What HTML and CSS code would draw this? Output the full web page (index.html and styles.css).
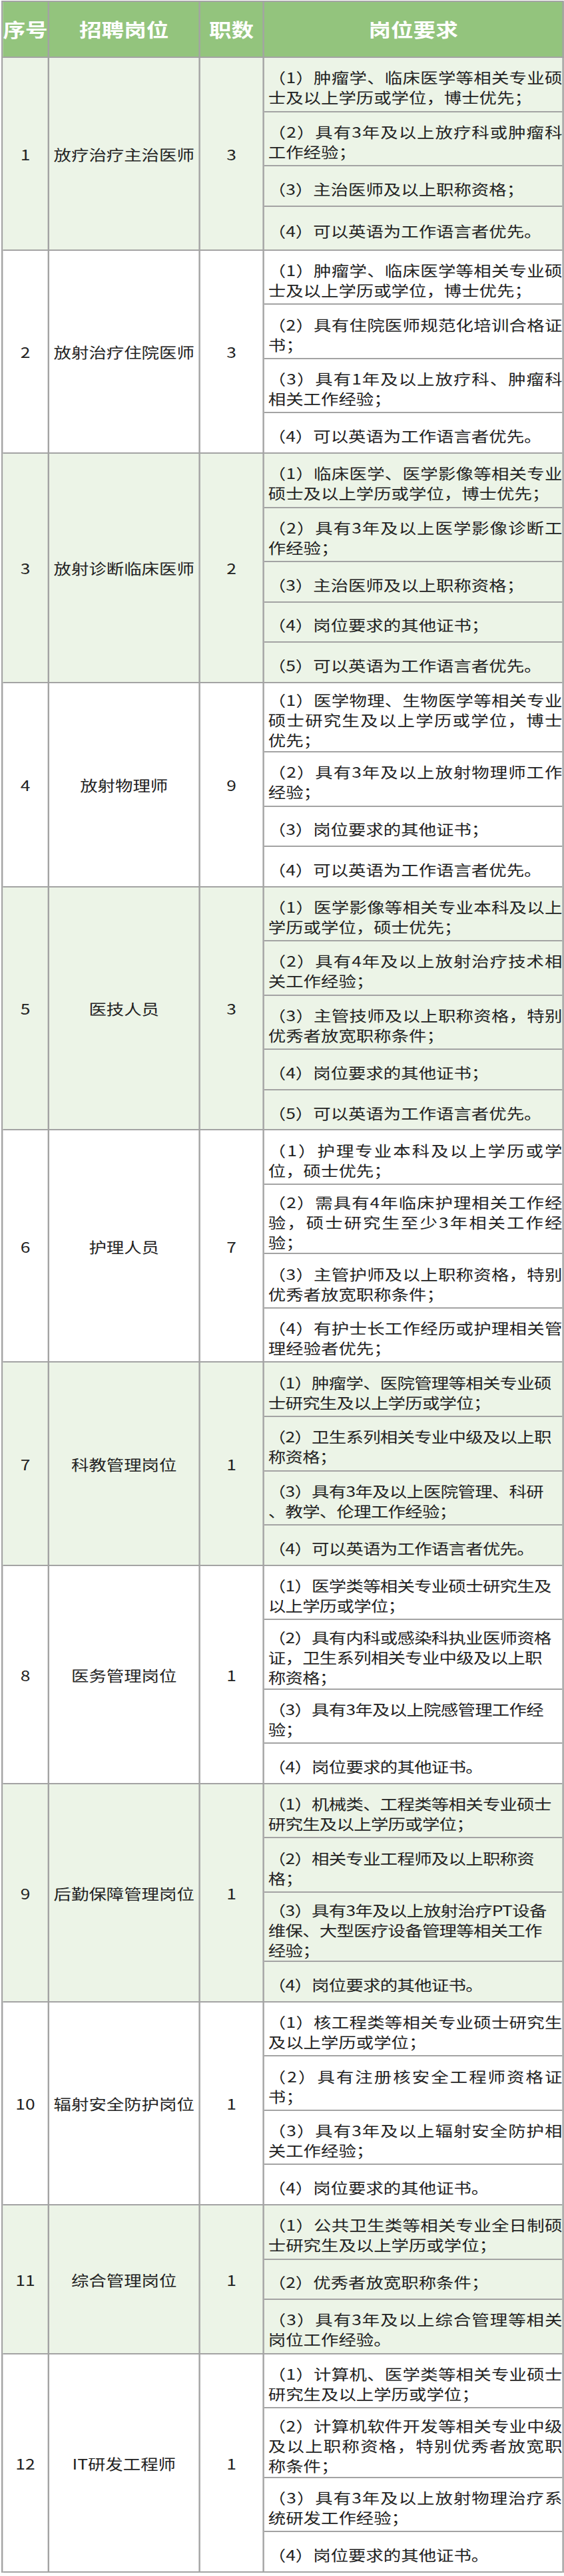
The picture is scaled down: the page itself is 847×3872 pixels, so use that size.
FILE: index.html
```html
<!DOCTYPE html>
<html lang="zh-CN">
<head>
<meta charset="utf-8">
<title>招聘岗位</title>
<link rel="stylesheet" href="styles.css">
</head>
<body>
<div class="page">
<div class="sheet">
  <div class="row head">
    <div class="c">序号</div><div class="c">招聘岗位</div><div class="c">职数</div><div class="c">岗位要求</div>
  </div>

  <div class="row alt">
    <div class="c">1</div><div class="c">放疗治疗主治医师</div><div class="c">3</div>
    <div class="reqs">
      <div class="r l2">（1）肿瘤学、临床医学等相关专业硕士及以上学历或学位，博士优先；</div>
      <div class="r l2">（2）具有3年及以上放疗科或肿瘤科工作经验；</div>
      <div class="r l1">（3）主治医师及以上职称资格；</div>
      <div class="r l1b">（4）可以英语为工作语言者优先。</div>
    </div>
  </div>

  <div class="row">
    <div class="c">2</div><div class="c">放射治疗住院医师</div><div class="c">3</div>
    <div class="reqs">
      <div class="r l2">（1）肿瘤学、临床医学等相关专业硕士及以上学历或学位，博士优先；</div>
      <div class="r l2">（2）具有住院医师规范化培训合格证书；</div>
      <div class="r l2">（3）具有1年及以上放疗科、肿瘤科相关工作经验；</div>
      <div class="r l1">（4）可以英语为工作语言者优先。</div>
    </div>
  </div>

  <div class="row alt">
    <div class="c">3</div><div class="c">放射诊断临床医师</div><div class="c">2</div>
    <div class="reqs">
      <div class="r l2">（1）临床医学、医学影像等相关专业硕士及以上学历或学位，博士优先；</div>
      <div class="r l2">（2）具有3年及以上医学影像诊断工作经验；</div>
      <div class="r l1">（3）主治医师及以上职称资格；</div>
      <div class="r l1">（4）岗位要求的其他证书；</div>
      <div class="r l1">（5）可以英语为工作语言者优先。</div>
    </div>
  </div>

  <div class="row">
    <div class="c">4</div><div class="c">放射物理师</div><div class="c">9</div>
    <div class="reqs">
      <div class="r l3">（1）医学物理、生物医学等相关专业硕士研究生及以上学历或学位，博士优先；</div>
      <div class="r l2">（2）具有3年及以上放射物理师工作经验；</div>
      <div class="r l1">（3）岗位要求的其他证书；</div>
      <div class="r l1">（4）可以英语为工作语言者优先。</div>
    </div>
  </div>

  <div class="row alt">
    <div class="c">5</div><div class="c">医技人员</div><div class="c">3</div>
    <div class="reqs">
      <div class="r l2">（1）医学影像等相关专业本科及以上学历或学位，硕士优先；</div>
      <div class="r l2">（2）具有4年及以上放射治疗技术相关工作经验；</div>
      <div class="r l2">（3）主管技师及以上职称资格，特别优秀者放宽职称条件；</div>
      <div class="r l1">（4）岗位要求的其他证书；</div>
      <div class="r l1">（5）可以英语为工作语言者优先。</div>
    </div>
  </div>

  <div class="row">
    <div class="c">6</div><div class="c">护理人员</div><div class="c">7</div>
    <div class="reqs">
      <div class="r l2">（1）护理专业本科及以上学历或学位，硕士优先；</div>
      <div class="r l3">（2）需具有4年临床护理相关工作经验，硕士研究生至少3年相关工作经验；</div>
      <div class="r l2">（3）主管护师及以上职称资格，特别优秀者放宽职称条件；</div>
      <div class="r l2">（4）有护士长工作经历或护理相关管理经验者优先；</div>
    </div>
  </div>

  <div class="row alt tight">
    <div class="c">7</div><div class="c">科教管理岗位</div><div class="c">1</div>
    <div class="reqs">
      <div class="r l2">（1）肿瘤学、医院管理等相关专业硕士研究生及以上学历或学位；</div>
      <div class="r l2">（2）卫生系列相关专业中级及以上职称资格；</div>
      <div class="r l2 anywhere">（3）具有3年及以上医院管理、科研、教学、伦理工作经验；</div>
      <div class="r l1">（4）可以英语为工作语言者优先。</div>
    </div>
  </div>

  <div class="row tight">
    <div class="c">8</div><div class="c">医务管理岗位</div><div class="c">1</div>
    <div class="reqs">
      <div class="r l2">（1）医学类等相关专业硕士研究生及以上学历或学位；</div>
      <div class="r l3">（2）具有内科或感染科执业医师资格证，卫生系列相关专业中级及以上职称资格；</div>
      <div class="r l2">（3）具有3年及以上院感管理工作经验；</div>
      <div class="r l1">（4）岗位要求的其他证书。</div>
    </div>
  </div>

  <div class="row alt tight">
    <div class="c">9</div><div class="c">后勤保障管理岗位</div><div class="c">1</div>
    <div class="reqs">
      <div class="r l2">（1）机械类、工程类等相关专业硕士研究生及以上学历或学位；</div>
      <div class="r l2">（2）相关专业工程师及以上职称资格；</div>
      <div class="r l3">（3）具有3年及以上放射治疗PT设备维保、大型医疗设备管理等相关工作经验；</div>
      <div class="r l1">（4）岗位要求的其他证书。</div>
    </div>
  </div>

  <div class="row">
    <div class="c">10</div><div class="c">辐射安全防护岗位</div><div class="c">1</div>
    <div class="reqs">
      <div class="r l2">（1）核工程类等相关专业硕士研究生及以上学历或学位；</div>
      <div class="r l2">（2）具有注册核安全工程师资格证书；</div>
      <div class="r l2">（3）具有3年及以上辐射安全防护相关工作经验；</div>
      <div class="r l1">（4）岗位要求的其他证书。</div>
    </div>
  </div>

  <div class="row alt">
    <div class="c">11</div><div class="c">综合管理岗位</div><div class="c">1</div>
    <div class="reqs">
      <div class="r l2">（1）公共卫生类等相关专业全日制硕士研究生及以上学历或学位；</div>
      <div class="r l1">（2）优秀者放宽职称条件；</div>
      <div class="r l2">（3）具有3年及以上综合管理等相关岗位工作经验。</div>
    </div>
  </div>

  <div class="row">
    <div class="c">12</div><div class="c">IT研发工程师</div><div class="c">1</div>
    <div class="reqs">
      <div class="r l2">（1）计算机、医学类等相关专业硕士研究生及以上学历或学位；</div>
      <div class="r l3">（2）计算机软件开发等相关专业中级及以上职称资格，特别优秀者放宽职称条件；</div>
      <div class="r l2">（3）具有3年及以上放射物理治疗系统研发工作经验；</div>
      <div class="r l1">（4）岗位要求的其他证书。</div>
    </div>
  </div>
</div>
</div>
</body>
</html>
```

FILE: styles.css
```css
html, body {
  margin: 0;
  padding: 0;
  background: #ffffff;
}

.page {
  padding: 1px 0 0 2px;
}

/* The source table is horizontally stretched; the sheet is laid out
   at its natural width and widened as a whole. */
.sheet {
  box-sizing: border-box;
  width: 704px;
  border-left: 2px solid #a3a3a3;
  border-top: 2px solid #a3a3a3;
  transform: scaleX(1.2);
  transform-origin: 0 0;
  font-family: "Noto Sans CJK SC", "Noto Sans", sans-serif;
  font-size: 22px;
  color: #222222;
}

.row {
  display: grid;
  grid-template-columns: 58px 189px 80px 375px;
}

.row.alt {
  background: #ecf4e7;
}

.c {
  box-sizing: border-box;
  display: flex;
  align-items: center;
  justify-content: center;
  text-align: center;
  white-space: nowrap;
  border-right: 2px solid #a3a3a3;
  border-bottom: 2px solid #a3a3a3;
  line-height: 30px;
}

.head {
  background: #93c47d;
}

.head .c {
  height: 84px;
  color: #ffffff;
  font-weight: 700;
  font-size: 28px;
}

.reqs {
  box-sizing: border-box;
  border-right: 2px solid #a3a3a3;
  display: flex;
  flex-direction: column;
}

.r {
  box-sizing: border-box;
  display: flex;
  flex-direction: column;
  justify-content: center;
  padding: 7px 0 0 5px;
  border-bottom: 2px solid #a3a3a3;
  line-height: 30px;
  text-align: justify;
}

.l1 { height: 60.5px; }
.l1b { height: 66px; }
.l2 { height: 81.6px; }
.l3 { height: 104.3px; }

.tight .r {
  text-align: left;
  letter-spacing: -0.6px;
  padding-right: 9px;
}

.r.anywhere {
  line-break: anywhere;
}
```
